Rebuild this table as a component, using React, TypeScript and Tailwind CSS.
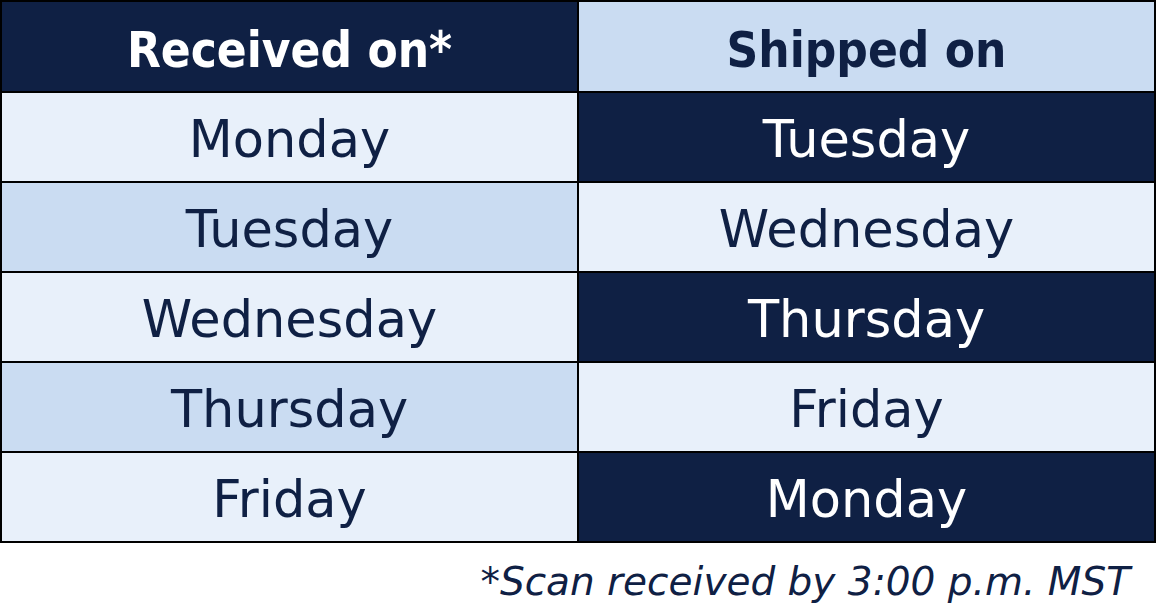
const NAVY = "bg-[#0f2044] text-white"
const LIGHT = "bg-[#e8f0fa] text-[#0f2044]"
const MID = "bg-[#cadcf2] text-[#0f2044]"

const rows: [string, string, string, string][] = [
  ["Monday", LIGHT, "Tuesday", NAVY],
  ["Tuesday", MID, "Wednesday", LIGHT],
  ["Wednesday", LIGHT, "Thursday", NAVY],
  ["Thursday", MID, "Friday", LIGHT],
  ["Friday", LIGHT, "Monday", NAVY],
]

function Cell({ text, tone }: { text: string; tone: string }) {
  return (
    <div className={`flex items-center justify-center pt-[5px] text-[51px] leading-none ${tone}`}>
      {text}
    </div>
  )
}

export default function App() {
  return (
    <div className="w-[1157px] h-[606px] bg-white" style={{ fontFamily: '"DejaVu Sans", sans-serif' }}>
      <div className="w-[1156px] grid grid-cols-2 grid-rows-[89px_repeat(5,88px)] gap-[2px] p-[2px] bg-black">
        <div
          className={`flex items-center justify-center pt-[7px] text-[49px] font-bold leading-none ${NAVY}`}
          style={{ fontFamily: '"DejaVu Sans Condensed", "DejaVu Sans", sans-serif' }}
        >
          Received on*
        </div>
        <div
          className={`flex items-center justify-center pt-[7px] text-[49px] font-bold leading-none ${MID}`}
          style={{ fontFamily: '"DejaVu Sans Condensed", "DejaVu Sans", sans-serif' }}
        >
          Shipped on
        </div>
        {rows.map(([a, ta, b, tb], i) => (
          <>
            <Cell key={`a${i}`} text={a} tone={ta} />
            <Cell key={`b${i}`} text={b} tone={tb} />
          </>
        ))}
      </div>
      <div className="flex justify-end pr-[27px] pt-[19px]">
        <span className="italic text-[39px] leading-none text-[#0f2044]">*Scan received by 3:00 p.m. MST</span>
      </div>
    </div>
  )
}
